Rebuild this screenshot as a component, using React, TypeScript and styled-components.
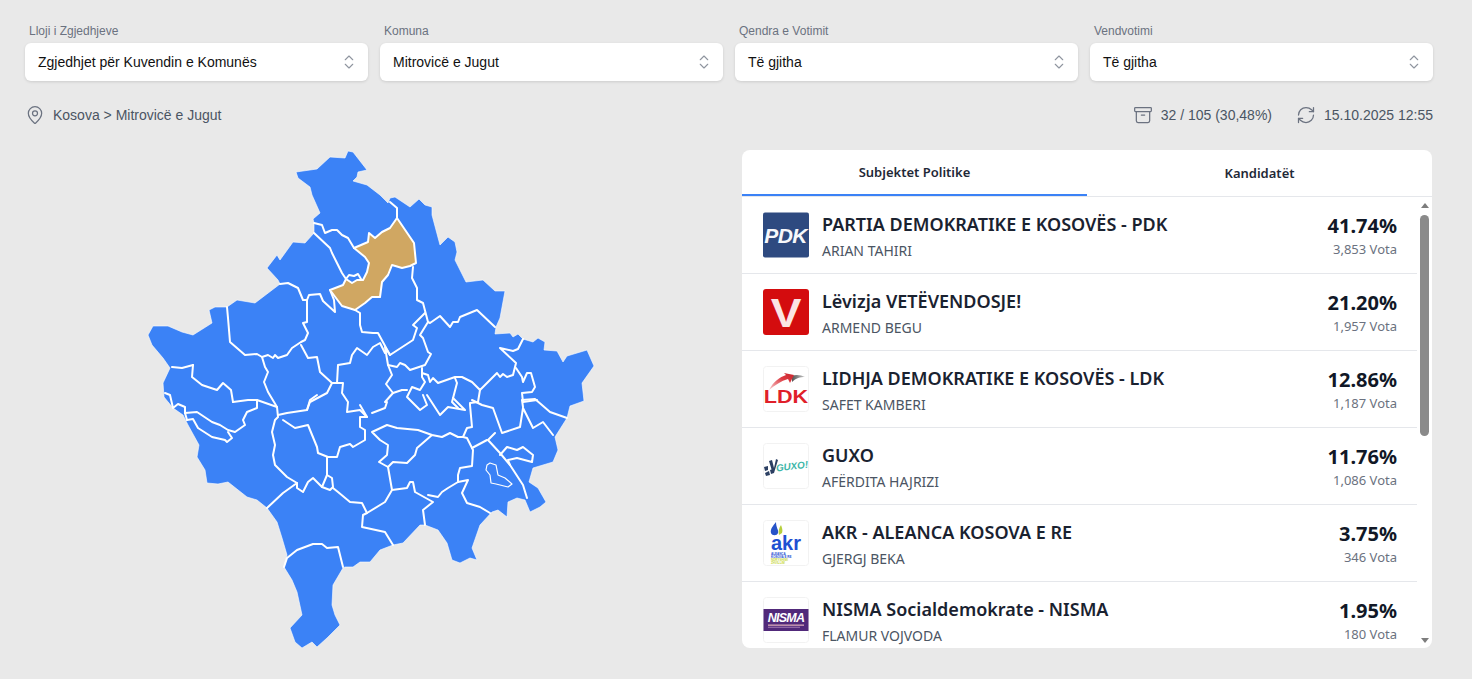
import React from "react";
import styled, { createGlobalStyle } from "styled-components";
import { Archive, ChevronsUpDown, MapPin, RefreshCw } from "lucide-react";

const Global = createGlobalStyle`
  html, body { margin: 0; padding: 0; height: 100%; background: #e9e9e9; overflow: hidden; }
  body { font-family: "Liberation Sans", Arial, sans-serif; }
  * { box-sizing: border-box; }
`;

const Page = styled.div`
  width: 1472px;
  height: 679px;
  padding: 24px 39px 0 25px;
  background: #e9e9e9;
  overflow: hidden;
`;
const Filters = styled.div`
  display: grid;
  grid-template-columns: repeat(4, 343px);
  column-gap: 12px;
`;
const Field = styled.div`
  display: flex;
  flex-direction: column;
  gap: 4px;
`;
const FieldLabel = styled.label`
  font-size: 12px;
  line-height: 15px;
  color: #6b7280;
  padding-left: 4px;
`;
const SelectBox = styled.div`
  height: 38px;
  background: #fff;
  border-radius: 6px;
  box-shadow: 0 1px 3px rgba(0, 0, 0, 0.12);
  display: flex;
  align-items: center;
  justify-content: space-between;
  padding: 0 10px 0 13px;
  font-size: 14px;
  color: #111;
  svg { color: #8f959f; }
`;
const InfoBar = styled.div`
  display: flex;
  justify-content: space-between;
  align-items: center;
  height: 20px;
  margin-top: 24px;
  font-size: 14px;
  color: #4b5563;
`;
const InfoGroup = styled.div`
  display: flex;
  align-items: center;
  gap: ${(p: { $gap: number }) => p.$gap}px;
`;
const InfoItem = styled.div`
  display: flex;
  align-items: center;
  gap: 8px;
  svg { color: #6b7280; flex: none; }
`;
const Content = styled.div`
  display: flex;
  margin-top: 25px;
`;
const MapColumn = styled.div`
  width: 717px;
  height: 510px;
  margin-top: -5px;
  padding-left: 115px;
  svg { display: block; }
`;
const Panel = styled.section`
  width: 690px;
  height: 498px;
  background: #fff;
  border-radius: 8px;
  overflow: hidden;
  display: flex;
  flex-direction: column;
`;
const Tabs = styled.div`
  height: 47px;
  flex: none;
  display: flex;
  border-bottom: 1px solid #e5e7eb;
`;
const Tab = styled.div<{ $active?: boolean; $w: number }>`
  width: ${(p) => p.$w}px;
  height: 46px;
  display: flex;
  align-items: center;
  justify-content: center;
  font-family: "Noto Sans", sans-serif;
  font-size: 13px;
  font-weight: 600;
  color: #1f2937;
  border-bottom: ${(p) => (p.$active ? "2px solid #3b82f6" : "none")};
`;
const ListArea = styled.div`
  flex: 1;
  min-height: 0;
  display: flex;
`;
const List = styled.div`
  flex: 1;
  min-width: 0;
  overflow: hidden;
`;
const Row = styled.div`
  height: 77px;
  display: flex;
  align-items: center;
  padding: 0 20px 0 21px;
  border-bottom: 1px solid #e5e7eb;
`;
const Logo = styled.div`
  width: 46px;
  height: 46px;
  flex: none;
  svg { display: block; }
`;
const Names = styled.div`
  flex: 1;
  min-width: 0;
  margin-left: 13px;
  padding-top: 3px;
  display: flex;
  flex-direction: column;
  gap: 5px;
`;
const Party = styled.div`
  font-family: "Noto Sans", sans-serif;
  font-size: 18px;
  line-height: 24px;
  font-weight: 600;
  color: #1a2230;
  white-space: nowrap;
`;
const Candidate = styled.div`
  font-family: "Noto Sans", sans-serif;
  font-size: 14px;
  line-height: 20px;
  color: #4b5563;
`;
const Result = styled.div`
  display: flex;
  flex-direction: column;
  align-items: flex-end;
  gap: 2px;
  padding-top: 2px;
`;
const Percent = styled.div`
  font-family: "Noto Sans", sans-serif;
  font-size: 20px;
  line-height: 24px;
  font-weight: 700;
  color: #111827;
`;
const Votes = styled.div`
  font-family: "Noto Sans", sans-serif;
  font-size: 13px;
  line-height: 18px;
  color: #6b7280;
`;
const Scrollbar = styled.div`
  width: 15px;
  flex: none;
  display: flex;
  flex-direction: column;
  align-items: center;
  padding: 6px 0 5px;
`;
const Arrow = styled.div<{ $down?: boolean }>`
  width: 0;
  height: 0;
  flex: none;
  border-left: 4.5px solid transparent;
  border-right: 4.5px solid transparent;
  ${(p) => (p.$down ? "border-top: 5px solid #7d7d7d;" : "border-bottom: 5px solid #7d7d7d;")}
`;
const Thumb = styled.div`
  width: 9px;
  height: 221px;
  flex: none;
  margin: 7px 0 auto;
  background: #8a8a8a;
  border-radius: 5px;
`;

const outline = "296,172 317,169 330,157 345,158 348,151 353,152 367,170 358,172 357,177 353,181 367,185 380,195 388,203 390,198 395,197 410,207 419,199 425,205 432,207 432,215 440,245 448,237 455,242 457,252 455,260 466,282 483,280 495,291 505,291 500,318 496,327 495,334 510,333 513,337 518,334 523,339 533,342 538,338 545,342 544,350 557,351 563,362 567,356 587,350 594,366 582,383 584,401 570,406 567,418 555,437 558,450 553,462 543,465 533,468 529,482 538,488 546,502 540,507 530,512 525,500 517,498 508,502 507,517 498,510 492,512 480,525 472,548 477,560 470,558 460,563 452,560 447,543 438,530 425,525 420,525 403,543 393,545 380,550 370,562 360,562 353,567 345,567 343,568 333,585 332,605 335,615 340,625 327,638 317,647 312,642 302,648 295,642 290,628 302,615 297,592 292,580 284,567 287,555 282,538 277,522 267,508 257,500 247,497 228,482 218,484 207,483 205,470 197,457 199,445 188,425 183,415 173,408 164,397 163,383 170,368 163,358 152,345 148,335 153,326 168,326 182,332 193,335 212,323 209,310 215,307 227,307 237,300 255,303 280,284 278,280 267,268 277,255 280,260 293,242 305,243 314,233 314,223 313,219 320,213 312,195 310,187 298,178";

const gold = "354,248 368,242 369,233 375,238 382,232 390,228 397,218 414,243 416,263 410,266 402,268 392,265 388,275 382,282 380,297 372,297 365,303 355,310 342,306 330,290 343,285 346,279 352,283 357,280 363,280 367,272 369,263 365,257";

const borders = [
  "284,567 287,558 297,550 313,544 322,544 327,548 338,547 343,567",
  "314,223 322,225 325,233 332,230 337,230 342,235 348,238 354,248",
  "397,218 397,208 390,202",
  "314,233 330,248 332,253 342,273 346,279",
  "346,279 349,275 354,276 358,274 361,279",
  "280,284 288,283 298,288 303,300 307,300 307,322 303,323 308,333 305,340 301,342 292,348 287,355 278,358 275,355 273,358 268,355 262,357 257,354 245,355 230,342 228,318 227,307",
  "330,290 334,300 335,312 323,301 320,294 309,295 307,300",
  "355,310 360,313 360,325 362,332 373,333 378,333 390,355 413,340 417,328 413,325 425,313",
  "413,267 412,278 417,288 417,300 423,303 428,322 430,323 440,316 450,327 453,322 458,322 460,317 477,310 495,327",
  "428,322 420,335 423,338 428,352 431,354 425,365 413,369 410,370 405,365 400,363 397,367 388,365 385,347 390,355",
  "388,365 392,375 386,384 393,393 385,402 387,402 385,408 372,413",
  "422,368 422,377 425,382 420,390 412,387 407,397 420,410 427,405 423,395",
  "402,390 393,393",
  "407,390 402,390",
  "422,373 428,375 430,382 433,378 438,383 455,377 462,377 472,382 480,390 497,373 500,377 503,374 507,377 513,375 516,363 500,348 513,351 518,349 523,339",
  "516,368 522,377 523,382 527,373 531,373 535,387 532,392 522,393 523,402 537,400",
  "455,378 457,383 452,402 458,408",
  "480,390 478,402 470,403 470,405 472,427 467,428 463,437 467,438 473,450 472,466 460,468 458,475 458,482",
  "427,395 440,415 448,407 465,410 453,398",
  "472,400 482,405 493,408 502,433 520,427 523,408 533,428 543,422 553,435",
  "523,407 522,400 535,399 550,412 567,418",
  "495,433 488,440 500,453 510,465 523,485 527,498",
  "472,448 487,440",
  "500,455 507,447 517,450 523,447 533,455 532,462 517,458 508,460 510,465",
  "262,357 265,367 268,372 264,382 268,392 277,407 278,417 275,420 272,432 275,445 273,455 275,465 287,477 297,483 283,493 267,508",
  "278,415 287,413 307,410 310,400 317,395",
  "283,420 295,428 308,425 317,447 318,453 328,457 337,457 340,447 350,444 353,447 365,440 365,430 360,427 360,417 367,417 360,405",
  "327,457 327,475 322,487 313,478 308,482 303,492 297,488 297,483",
  "322,487 330,490 333,487 332,478 327,475",
  "333,488 338,492 350,502 362,503 367,513 363,515 362,527 385,532 393,545",
  "367,513 385,502 392,490 407,488 410,482 413,482 415,492 433,502 423,510 425,525",
  "428,495 438,497 442,492 448,488 458,482 468,480 462,493 467,503 480,507 490,513",
  "458,437 450,433 442,437 432,435 417,448 415,455 407,463 393,462 388,467 379,462 387,455 388,445 380,440 372,432 387,425 397,428 418,430 432,435",
  "388,467 392,490",
  "193,365 192,377 202,385 217,390 223,383 231,390 233,402",
  "172,367 182,368 193,365",
  "165,393 170,395 173,408 178,404 185,407 185,413 197,412 212,422 220,425 228,430 235,432 245,425 243,420 247,412 257,408 257,400",
  "233,402 248,400 257,400 277,407",
  "187,420 193,419 198,428 212,437 225,440 227,442 232,438 228,432",
  "185,413 187,420",
  "301,345 308,358 317,357 320,372 332,383 337,383 338,365 350,363 352,355 357,348 367,355 373,347 380,343 385,353",
  "332,383 327,393 310,402 307,410",
  "337,383 343,383 342,393 348,402 347,412 360,410 367,417",
  "463,437 458,437",
];

const lake = "487,465 490,463 496,465 498,475 505,478 512,484 508,487 496,484 491,483 490,475 486,470";

const KosovoMap = () => (
  <svg width="460" height="510" viewBox="140 145 460 510" role="img" aria-label="Kosova">
    <polygon points={outline} fill="#3b82f6" stroke="#fff" strokeWidth="1" strokeLinejoin="round" strokeOpacity="0.6" />
    <polygon points={gold} fill="#d0a762" stroke="#fff" strokeWidth="2" strokeLinejoin="round" />
    {borders.map((b) => (
      <polyline key={b} points={b} fill="none" stroke="#fff" strokeWidth="2" strokeLinejoin="round" strokeLinecap="round" />
    ))}
    <polygon points={lake} fill="#3b82f6" stroke="#fff" strokeWidth="1.2" strokeLinejoin="round" />
  </svg>
);

const PdkLogo = () => (
  <svg width="46" height="46" viewBox="0 0 46 46">
    <rect width="46" height="45" y="0.5" rx="2" fill="#2e4a80" />
    <text x="22.5" y="31" textAnchor="middle" fontFamily="Liberation Sans" fontStyle="italic" fontWeight="700" fontSize="21" letterSpacing="-0.6" fill="#f7f8fb">PDK</text>
  </svg>
);
const VvLogo = () => (
  <svg width="46" height="46" viewBox="0 0 46 46">
    <rect width="46" height="46" rx="3" fill="#d40c0e" />
    <text x="0" y="0" textAnchor="middle" fontFamily="Liberation Sans" fontWeight="700" fontSize="40" fill="#fbe4e4" transform="translate(23 38) scale(1.15 1)">V</text>
  </svg>
);
const Tile = ({ children }: { children: React.ReactNode }) => (
  <svg width="46" height="46" viewBox="0 0 46 46">
    <rect x="0.5" y="0.5" width="45" height="45" rx="3" fill="#fff" stroke="#f2f2f2" />
    {children}
  </svg>
);
const LdkLogo = () => (
  <Tile>
    <defs>
      <linearGradient id="sw" x1="0" x2="1" y1="1" y2="0">
        <stop offset="0" stopColor="#f9d3d5" />
        <stop offset="0.6" stopColor="#dd3a42" />
        <stop offset="1" stopColor="#c9252d" />
      </linearGradient>
      <linearGradient id="tail" x1="0" x2="1" y1="0" y2="0">
        <stop offset="0" stopColor="#555" />
        <stop offset="1" stopColor="#c8c8c8" />
      </linearGradient>
    </defs>
    <path d="M29 10 C33 8 38 9 42 11 C37 11 33 12 29 16 Z" fill="url(#tail)" />
    <path d="M6 24 C10 16 17 11 23 9 L21 7 L31 9 L27 17 L25 13 C18 15 12 19 6 24 Z" fill="url(#sw)" />
    <text x="0" y="0" textAnchor="middle" fontFamily="Liberation Sans" fontWeight="700" fontSize="18.5" fill="#e01f2a" transform="translate(23 37) scale(1.17 1)">LDK</text>
  </Tile>
);
const GuxoLogo = () => (
  <Tile>
    <path d="M1 24 L5 23 L5 27 L2 28 Z M2 30 L6 28 L7 32 L3 33 Z M7 27 L10 26 L11 30 L8 31 Z M6 18 L9 17 L11 25 L13 16 L15 17 L11 30 L9 28 Z" fill="#2b3f62" />
    <text x="13.5" y="28.5" fontFamily="Liberation Sans" fontStyle="italic" fontWeight="700" fontSize="9.8" fill="#3db6a8" transform="rotate(-7 13.5 28.5)">GUXO!</text>
  </Tile>
);
const AkrLogo = () => (
  <Tile>
    <path d="M13 2 C10 6 7 9 8 13 C9 16 14 16 15 13 C16 10 13 8 13 2 Z" fill="#2653c8" />
    <path d="M18 5 C16 8 15 11 16 15 L19 13 C20 10 19 8 18 5 Z" fill="#b6cf3d" />
    <text x="8" y="30" fontFamily="Liberation Sans" fontWeight="700" fontSize="20" fill="#1e4fd2">akr</text>
    <text x="8" y="34.5" fontFamily="Liberation Sans" fontWeight="700" fontSize="3" fill="#1e4fd2">ALEANCA</text>
    <text x="8" y="37.5" fontFamily="Liberation Sans" fontWeight="700" fontSize="3" fill="#1e4fd2">KOSOVA E RE</text>
    <text x="8" y="40.5" fontFamily="Liberation Sans" fontWeight="700" fontSize="3" fill="#c9d83e">NDRYSHIMI</text>
    <text x="8" y="43.5" fontFamily="Liberation Sans" fontWeight="700" fontSize="3" fill="#c9d83e">ZHVILLIM</text>
  </Tile>
);
const NismaLogo = () => (
  <Tile>
    <rect x="0.5" y="12" width="45" height="22" fill="#51297a" />
    <text x="23" y="25" textAnchor="middle" fontFamily="Liberation Sans" fontStyle="italic" fontWeight="700" fontSize="12.5" letterSpacing="-0.8" fill="#fff">NISMA</text>
    <rect x="5" y="27.5" width="36" height="1.3" fill="#d8a9b8" />
    <rect x="5" y="29.8" width="32" height="0.8" fill="#b88fc0" />
  </Tile>
);

const filters = [
  ["Lloji i Zgjedhjeve", "Zgjedhjet për Kuvendin e Komunës"],
  ["Komuna", "Mitrovicë e Jugut"],
  ["Qendra e Votimit", "Të gjitha"],
  ["Vendvotimi", "Të gjitha"],
];

const rows = [
  { logo: <PdkLogo />, party: "PARTIA DEMOKRATIKE E KOSOVËS - PDK", name: "ARIAN TAHIRI", pct: "41.74%", votes: "3,853 Vota" },
  { logo: <VvLogo />, party: "Lëvizja VETËVENDOSJE!", name: "ARMEND BEGU", pct: "21.20%", votes: "1,957 Vota" },
  { logo: <LdkLogo />, party: "LIDHJA DEMOKRATIKE E KOSOVËS - LDK", name: "SAFET KAMBERI", pct: "12.86%", votes: "1,187 Vota" },
  { logo: <GuxoLogo />, party: "GUXO", name: "AFËRDITA HAJRIZI", pct: "11.76%", votes: "1,086 Vota" },
  { logo: <AkrLogo />, party: "AKR - ALEANCA KOSOVA E RE", name: "GJERGJ BEKA", pct: "3.75%", votes: "346 Vota" },
  { logo: <NismaLogo />, party: "NISMA Socialdemokrate - NISMA", name: "FLAMUR VOJVODA", pct: "1.95%", votes: "180 Vota" },
];

export default function App() {
  return (
    <Page>
      <Global />
      <Filters>
        {filters.map(([label, value]) => (
          <Field key={label}>
            <FieldLabel>{label}</FieldLabel>
            <SelectBox>
              {value}
              <ChevronsUpDown size={18} strokeWidth={1.5} />
            </SelectBox>
          </Field>
        ))}
      </Filters>
      <InfoBar>
        <InfoItem>
          <MapPin size={20} strokeWidth={1.5} />
          Kosova &gt; Mitrovicë e Jugut
        </InfoItem>
        <InfoGroup $gap={24}>
          <InfoItem>
            <Archive size={20} strokeWidth={1.5} />
            32 / 105 (30,48%)
          </InfoItem>
          <InfoItem>
            <RefreshCw size={20} strokeWidth={1.5} />
            15.10.2025 12:55
          </InfoItem>
        </InfoGroup>
      </InfoBar>
      <Content>
        <MapColumn>
          <KosovoMap />
        </MapColumn>
        <Panel>
          <Tabs>
            <Tab $active $w={345}>Subjektet Politike</Tab>
            <Tab $w={345}>Kandidatët</Tab>
          </Tabs>
          <ListArea>
            <List>
              {rows.map((r) => (
                <Row key={r.party}>
                  <Logo>{r.logo}</Logo>
                  <Names>
                    <Party>{r.party}</Party>
                    <Candidate>{r.name}</Candidate>
                  </Names>
                  <Result>
                    <Percent>{r.pct}</Percent>
                    <Votes>{r.votes}</Votes>
                  </Result>
                </Row>
              ))}
            </List>
            <Scrollbar>
              <Arrow />
              <Thumb />
              <Arrow $down />
            </Scrollbar>
          </ListArea>
        </Panel>
      </Content>
    </Page>
  );
}
